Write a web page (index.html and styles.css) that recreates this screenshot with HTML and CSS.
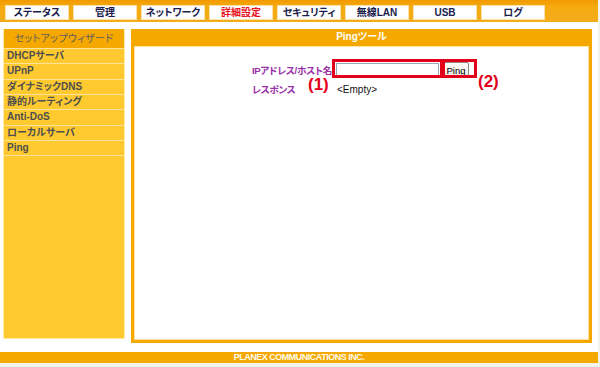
FILE: index.html
```html
<!DOCTYPE html>
<html lang="ja">
<head>
  <meta charset="UTF-8" />
  <title>Pingツール</title>
  <link rel="stylesheet" href="styles.css">
</head>
<body>
<div class="page">

  <div class="topbar">
    <div class="tab">ステータス</div>
    <div class="tab">管理</div>
    <div class="tab">ネットワーク</div>
    <div class="tab current">詳細設定</div>
    <div class="tab">セキュリティ</div>
    <div class="tab">無線LAN</div>
    <div class="tab">USB</div>
    <div class="tab">ログ</div>
  </div>

  <div class="content">
    <div class="sidebar">
      <div class="side-head">セットアップウィザード</div>
      <div class="side-item">DHCPサーバ</div>
      <div class="side-item">UPnP</div>
      <div class="side-item">ダイナミックDNS</div>
      <div class="side-item">静的ルーティング</div>
      <div class="side-item">Anti-DoS</div>
      <div class="side-item">ローカルサーバ</div>
      <div class="side-item">Ping</div>
    </div>

    <div class="main">
      <div class="main-title">Pingツール</div>
      <div class="main-body">
        <div class="form">
          <div class="lbl">IPアドレス/ホスト名</div>
          <div class="field">
            <input type="text" class="host" />
            <button class="ping">Ping</button>
            <span class="mark mark1"></span>
            <span class="mark mark2"></span>
            <span class="num num1">(1)</span>
            <span class="num num2">(2)</span>
          </div>
          <div class="lbl">レスポンス</div>
          <div class="resp">&lt;Empty&gt;</div>
        </div>
      </div>
    </div>
  </div>

  <div class="footer">PLANEX COMMUNICATIONS INC.</div>
</div>
</body>
</html>
```

FILE: styles.css
```css
body { margin: 0; background: #f3f3ee; font-family: "Liberation Sans", Arial, "Noto Sans CJK JP", sans-serif; }
.page { width: 598px; background: white; }

.topbar { height: 22px; box-sizing: border-box; padding: 5px 0 0 5px; display: flex; gap: 4px; background: linear-gradient(#f29a00, #f5aa10 30%, #f3ac1c); }
.tab { width: 64px; height: 15px; box-sizing: border-box; background: white; border: 1px solid #fbe3a8; text-align: center; font-size: 10px; line-height: 13px; font-weight: bold; color: #1c1c4c; font-feature-settings: "palt"; }
.tab.current { color: #e8101c; }

.content { display: flex; margin-top: 7px; }
.sidebar { width: 122px; height: 310px; margin-left: 3px; box-sizing: border-box; background: #ffca30; border: 1px solid #ffe9a6; border-top: none; }
.side-head { height: 20px; background: #f5a800; color: #5e5e5e; font-size: 10px; line-height: 20px; text-align: center; letter-spacing: 0.3px; font-feature-settings: "palt"; border-bottom: 1px solid #ffe39a; box-sizing: border-box; }
.side-item { height: 15.33px; box-sizing: border-box; border-bottom: 1px solid #ffe39a; padding-left: 3px; font-size: 10px; font-weight: bold; line-height: 14px; color: #4e4e4e; font-feature-settings: "palt"; }

.main { width: 461px; height: 314px; margin-left: 6px; box-sizing: border-box; background: #f5a800; padding: 0 3px 3px 3px; display: flex; flex-direction: column; }
.main-title { height: 17px; color: white; font-size: 10px; font-weight: bold; text-align: center; line-height: 16px; font-feature-settings: "palt"; }
.main-body { flex: 1; background: white; border: 1px solid #ffe2a0; }

.form { display: grid; grid-template-columns: 81px auto; column-gap: 3px; row-gap: 4px; align-items: center; margin: 15px 0 0 117px; }
.lbl { color: #9a30a8; font-size: 9.6px; font-weight: bold; letter-spacing: -0.3px; font-feature-settings: "palt"; white-space: nowrap; }
.field { position: relative; display: flex; align-items: center; gap: 4px; height: 16px; }
.host { width: 103px; height: 15px; box-sizing: border-box; border: 1px solid #9aa6b0; padding: 0; margin: 0; }
.ping { width: 26px; height: 16px; padding: 0; font-family: "Liberation Sans", Arial, sans-serif; font-size: 9.5px; color: #000; background: linear-gradient(#fdfdfb, #ece9df); border: 1px solid #8a8a8a; border-radius: 2px; }
.resp { font-size: 10px; color: #111; padding-left: 1px; }

.mark { position: absolute; top: -3px; height: 19px; border: 3px solid #e2001a; box-sizing: border-box; }
.mark1 { left: -4px; width: 111px; }
.mark2 { left: 106px; width: 35px; }
.num { position: absolute; color: #e2001a; font-size: 17px; font-weight: bold; }
.num1 { left: -28px; top: 13px; }
.num2 { left: 142px; top: 10px; }

.footer { margin-top: 9px; height: 11px; background: #f5a800; color: #fffbee; font-size: 9px; font-weight: bold; line-height: 11px; text-align: center; letter-spacing: -0.5px; }
```
